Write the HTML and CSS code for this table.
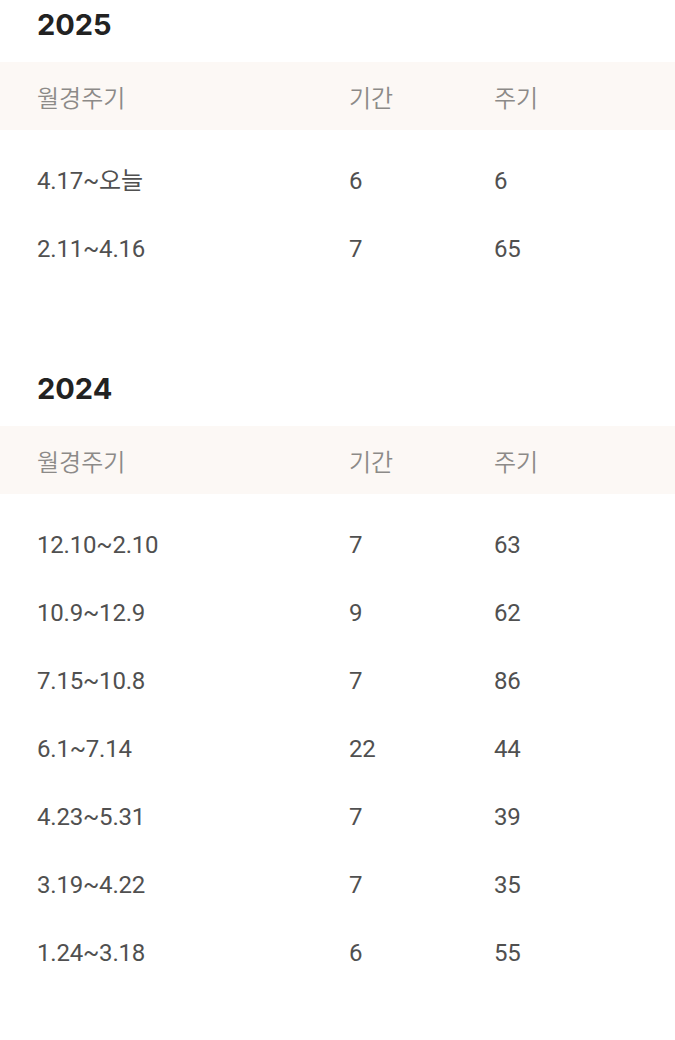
FILE: index.html
```html
<!DOCTYPE html>
<html lang="ko">
<head>
<meta charset="utf-8">
<link rel="stylesheet" href="styles.css">
</head>
<body>
<section class="year">
  <h2 class="year-title">2025</h2>
  <div class="thead">
    <span>월경주기</span><span>기간</span><span>주기</span>
  </div>
  <div class="tbody">
    <div class="row"><span>4.17~오늘</span><span>6</span><span>6</span></div>
    <div class="row"><span>2.11~4.16</span><span>7</span><span>65</span></div>
  </div>
</section>
<section class="year">
  <h2 class="year-title">2024</h2>
  <div class="thead">
    <span>월경주기</span><span>기간</span><span>주기</span>
  </div>
  <div class="tbody">
    <div class="row"><span>12.10~2.10</span><span>7</span><span>63</span></div>
    <div class="row"><span>10.9~12.9</span><span>9</span><span>62</span></div>
    <div class="row"><span>7.15~10.8</span><span>7</span><span>86</span></div>
    <div class="row"><span>6.1~7.14</span><span>22</span><span>44</span></div>
    <div class="row"><span>4.23~5.31</span><span>7</span><span>39</span></div>
    <div class="row"><span>3.19~4.22</span><span>7</span><span>35</span></div>
    <div class="row"><span>1.24~3.18</span><span>6</span><span>55</span></div>
  </div>
</section>
</body>
</html>
```
FILE: styles.css
```css
html, body {
  margin: 0;
  padding: 0;
  background: #ffffff;
}
body {
  font-family: "Noto Sans CJK KR", "Noto Sans", sans-serif;
  width: 675px;
}
.year {
  display: flex;
  flex-direction: column;
}
.year + .year {
  margin-top: 66px;
}
.year-title {
  margin: 0;
  height: 62px;
  box-sizing: border-box;
  padding-left: 37px;
  font-family: "Inter", "Noto Sans CJK KR", sans-serif;
  font-size: 29px;
  font-weight: 700;
  line-height: 50px;
  color: #222222;
}
.thead, .row {
  display: grid;
  grid-template-columns: 312px 145px 1fr;
  padding-left: 37px;
  align-items: center;
  height: 68px;
}
.thead {
  background: #fcf8f5;
  font-size: 24px;
  color: #8c8a88;
  font-weight: 350;
}
.tbody {
  padding: 16px 0;
}
.row {
  font-family: "Roboto", "Noto Sans CJK KR", sans-serif;
  font-size: 24px;
  color: #505050;
  line-height: 30px;
  letter-spacing: -0.2px;
}
.row span {
  transform: translateY(1px);
}
```
